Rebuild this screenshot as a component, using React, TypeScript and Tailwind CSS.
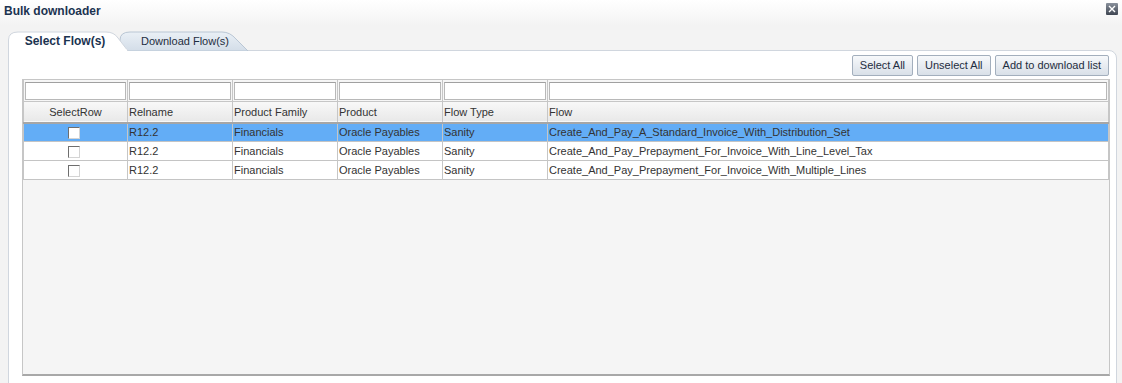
import React, { useState } from 'react';

type Flow = {
  rel: string;
  family: string;
  product: string;
  type: string;
  flow: string;
};

const flows: Flow[] = [
  { rel: 'R12.2', family: 'Financials', product: 'Oracle Payables', type: 'Sanity', flow: 'Create_And_Pay_A_Standard_Invoice_With_Distribution_Set' },
  { rel: 'R12.2', family: 'Financials', product: 'Oracle Payables', type: 'Sanity', flow: 'Create_And_Pay_Prepayment_For_Invoice_With_Line_Level_Tax' },
  { rel: 'R12.2', family: 'Financials', product: 'Oracle Payables', type: 'Sanity', flow: 'Create_And_Pay_Prepayment_For_Invoice_With_Multiple_Lines' },
];

const columns = ['SelectRow', 'Relname', 'Product Family', 'Product', 'Flow Type', 'Flow'];

function ToolButton({ label }: { label: string }) {
  return (
    <button
      type="button"
      className="h-[21px] px-[7px] border border-[#a3afbd] rounded-[2px] bg-gradient-to-b from-[#f7f9fb] to-[#d9e0e8] text-[11px] text-[#1e2d40] leading-none"
    >
      {label}
    </button>
  );
}

function App() {
  const [selected] = useState(0);

  return (
    <div
      className="w-[1122px] h-[383px] overflow-hidden bg-[#eeeeee] text-[#333333]"
      style={{ fontFamily: '"Liberation Sans", Arial, sans-serif' }}
    >
      {/* title bar */}
      <div className="h-[26px] bg-gradient-to-b from-white to-[#f3f3f3] flex items-center justify-between pl-[4px] pr-[4px]">
        <span className="text-[12px] font-bold text-[#1b3350] -mt-[4px]">Bulk downloader</span>
        <span className="w-[12px] h-[12px] -mt-[8px] rounded-[1px] bg-gradient-to-b from-[#8a919c] to-[#3f4652] flex items-center justify-center">
          <svg width="8" height="8" viewBox="0 0 8 8">
            <path d="M1 1 L7 7 M7 1 L1 7" stroke="white" strokeWidth="1.4" />
          </svg>
        </span>
      </div>

      <div className="bg-[#f3f3f3] pl-[8px] pr-[5px]">
        {/* tabs */}
        <div className="relative h-[25px]">
          <svg className="absolute left-0 top-0" width="260" height="25" viewBox="0 0 260 25">
            <defs>
              <linearGradient id="inact" x1="0" y1="0" x2="0" y2="1">
                <stop offset="0" stopColor="#eaf0f6" />
                <stop offset="1" stopColor="#d3dde8" />
              </linearGradient>
            </defs>
            <path d="M112 25 L112 14 Q112 6 122 6 L214 6 Q222 6 228 13 L240 25 Z" fill="url(#inact)" stroke="#b9c6d4" />
            <path d="M0.5 25 L0.5 14 Q0.5 6 10 6 L98 6 Q106 6 110 12 L120 25 Z" fill="white" stroke="#d0d6de" />
            <path d="M1 24.5 L119 24.5" stroke="white" strokeWidth="2" />
          </svg>
          <div className="relative flex h-full items-end">
            <span className="w-[112px] h-[19px] text-center text-[12px] font-bold text-[#1b3350] leading-[18px] pl-[2px]">Select Flow(s)</span>
            <span className="w-[126px] h-[19px] text-center text-[11px] text-[#1e2d40] leading-[18px] pl-[4px]">Download Flow(s)</span>
          </div>
        </div>

        {/* panel */}
        <div className="h-[340px] bg-white border border-[#d0d6de] rounded-tr-[8px] -mt-px pl-[13px] pr-[6px] pt-[4px]">
          <div className="flex justify-end gap-[4px] pr-px h-[22px]">
            <ToolButton label="Select All" />
            <ToolButton label="Unselect All" />
            <ToolButton label="Add to download list" />
          </div>

          <div className="mt-[2px] h-[297px] bg-[#f5f5f5] border-l border-r border-[#c6c6c6] border-b-2 border-b-[#a8a8a8] flex flex-col">
            <table className="w-full border-collapse table-fixed text-[11px]">
              <colgroup>
                <col className="w-[104px]" />
                <col className="w-[105px]" />
                <col className="w-[105px]" />
                <col className="w-[105px]" />
                <col className="w-[105px]" />
                <col />
              </colgroup>
              <thead>
                <tr className="h-[22px] bg-[#f6f6f6]">
                  {columns.map((c) => (
                    <th key={c} className="border border-[#c6c6c6] p-[1px]">
                      <div className="h-[18px] bg-white border border-[#b8b8b8] border-t-[#a0a0a0]" />
                    </th>
                  ))}
                </tr>
                <tr className="h-[21px] bg-gradient-to-b from-[#f8f8f8] to-[#e9e9e9] border-b-2 border-b-[#a6a6a6]">
                  {columns.map((c, i) => (
                    <th
                      key={c}
                      className={`border-l border-r border-[#c6c6c6] font-normal text-[#333] px-[1px] ${i === 0 ? 'text-center' : 'text-left'}`}
                    >
                      {c}
                    </th>
                  ))}
                </tr>
              </thead>
              <tbody>
                {flows.map((f, i) => (
                  <tr
                    key={f.flow}
                    className={`h-[19px] border-b border-[#c4c4c4] ${i === selected ? 'bg-[#63adf6]' : 'bg-white'}`}
                  >
                    <td className="border-l border-r border-[#c6c6c6] text-center">
                      <span className="inline-block align-middle w-[12px] h-[12px] -ml-[3px] bg-white border border-[#6e6e6e] border-r-[#d4d4d4] border-b-[#d4d4d4]" />
                    </td>
                    <td className="border-l border-r border-[#c6c6c6] px-[1px] whitespace-nowrap">{f.rel}</td>
                    <td className="border-l border-r border-[#c6c6c6] px-[1px] whitespace-nowrap">{f.family}</td>
                    <td className="border-l border-r border-[#c6c6c6] px-[1px] whitespace-nowrap">{f.product}</td>
                    <td className="border-l border-r border-[#c6c6c6] px-[1px] whitespace-nowrap">{f.type}</td>
                    <td className="border-l border-r border-[#c6c6c6] px-[1px] whitespace-nowrap">{f.flow}</td>
                  </tr>
                ))}
              </tbody>
            </table>
          </div>
        </div>
      </div>
    </div>
  );
}

export default App;
